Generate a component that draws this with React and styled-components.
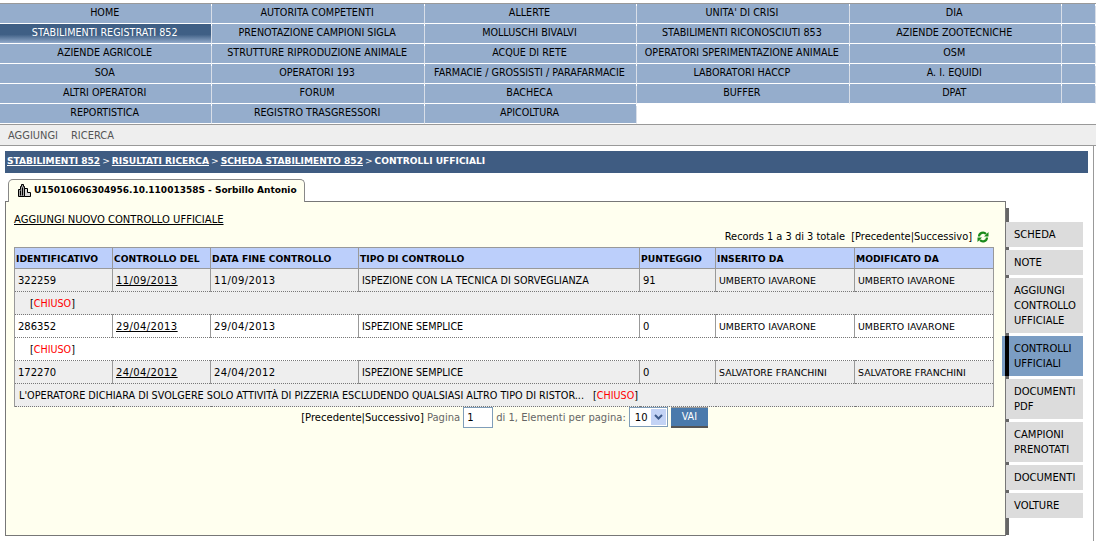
import React from 'react';
import styled, { createGlobalStyle } from 'styled-components';

const Global = createGlobalStyle`
  html, body { margin: 0; padding: 0; background: #fff; }
  body { font-family: "DejaVu Sans", Verdana, sans-serif; font-size: 9.6px; color: #000; overflow: hidden; }
  * { box-sizing: border-box; }
`;

const Page = styled.div`
  width: 1096px;
  height: 541px;
  padding-top: 3px;
  overflow: hidden;
`;
const Menu = styled.nav`
  display: grid;
  grid-template-columns: repeat(5, 212.4px) 34px;
  grid-auto-rows: 20px;
  border-top: 1px solid #999;
  height: 121px;
`;
const MenuItem = styled.a`
  position: relative;
  display: flex;
  justify-content: center;
  align-items: flex-start;
  padding: 3px 2px 0 0;
  line-height: 12px;
  white-space: nowrap;
  background: ${p => p.$active
    ? 'linear-gradient(#3f5f85 0, #3f5f85 55%, #93abcb 100%)'
    : '#95adcc'};
  color: ${p => (p.$active ? '#fff' : '#000')};
  border-right: 1px solid #d8dee8;
  border-bottom: 1px solid #fff;
  &::after {
    content: "";
    position: absolute;
    top: 0;
    right: -1px;
    width: 1px;
    height: 2px;
    background: #fff;
  }
`;
const SubBar = styled.div`
  display: flex;
  gap: 13px;
  height: 22px;
  padding: 5px 8px 0;
  font-size: 9.9px;
  line-height: 12px;
  background: #eee;
  border-top: 1px solid #999;
  border-bottom: 1px solid #999;
  color: #555;
`;
const Main = styled.main`
  width: 1094px;
  height: 396px;
  padding: 5px 5px 0;
  border-right: 1px solid #999;
`;
const Crumbs = styled.div`
  height: 22px;
  width: 1083px;
  padding: 3px 2px 0;
  background: #3f5c82;
  color: #fff;
  font-size: 9.1px;
  font-weight: bold;
  line-height: 14px;
  white-space: nowrap;
`;
const CrumbLink = styled.a`
  text-decoration: underline;
`;
const CrumbSep = styled.span`
  font-weight: normal;
  margin: 0 2px;
`;
const TabRow = styled.div`
  display: flex;
  height: 23px;
  margin-top: 6px;
  padding-left: 3px;
  position: relative;
  z-index: 1;
`;
const Tab = styled.div`
  display: flex;
  align-items: center;
  gap: 2px;
  width: 297px;
  height: 23px;
  padding: 0 0 2px 8px;
  background: #ffffef;
  border: 1px solid #888;
  border-bottom: none;
  border-radius: 5px 5px 0 0;
  font-size: 9px;
  font-weight: bold;
  white-space: nowrap;
  & > svg { flex: none; }
`;
const Body = styled.div`
  display: flex;
  margin-top: -1px;
`;
const Panel = styled.section`
  width: 1001px;
  height: 335px;
  padding: 12px 8px 0;
  background: #ffffef;
  border: 1px solid #777;
`;
const AddLink = styled.a`
  display: block;
  font-size: 10px;
  line-height: 12px;
  text-decoration: underline;
`;
const Records = styled.div`
  display: flex;
  justify-content: flex-end;
  align-items: center;
  gap: 5px;
  height: 14px;
  margin-top: 4px;
  padding-right: 8px;
  font-size: 9.850px;
  line-height: 12px;
`;
const Table = styled.table`
  width: 979px;
  margin-top: 3px;
  border-collapse: collapse;
  table-layout: fixed;
  background: #fff;
`;
const Th = styled.th`
  height: 21px;
  padding: 0 1px;
  text-align: left;
  white-space: nowrap;
  background: #bccffb;
  border: 1px solid #999;
  font-size: 9.2px;
  font-weight: bold;
`;
const sizeFor = p => (p.$num ? '10px' : p.$name ? '9.400px' : 'inherit');
const Td = styled.td`
  height: 23px;
  padding: 0 3px;
  white-space: nowrap;
  background: ${p => (p.$alt ? '#eee' : '#fff')};
  border-left: 1px solid #999;
  border-right: 1px solid #999;
  border-bottom: 1px dotted #777;
  font-size: ${sizeFor};
  letter-spacing: ${p => (p.$date ? '0.4px' : 'normal')};
`;
const NoteCell = styled(Td)`
  padding-left: ${p => (p.$note ? '4px' : '15px')};
`;
const NoteText = styled.span`
  margin-right: 9px;
  font-size: 9.700px;
`;
const DateLink = styled.a`
  text-decoration: underline;
`;
const Closed = styled.span`
  color: #f00;
`;
const Pager = styled.div`
  display: flex;
  justify-content: center;
  align-items: center;
  gap: 3px;
  height: 20px;
  width: 981px;
  font-size: 10px;
  color: #666;
  white-space: nowrap;
`;
const Dark = styled.span`
  color: #000;
`;
const PageInput = styled.input`
  width: 30px;
  height: 21px;
  padding: 0 3px;
  border: 1px solid #7f9db9;
  background: #fff;
  font: 10px "DejaVu Sans", sans-serif;
  color: #000;
`;
const SelectBox = styled.div`
  display: flex;
  align-items: center;
  width: 39px;
  height: 20px;
  padding: 1px;
  border: 1px solid #7f9db9;
  background: #fff;
  color: #000;
`;
const SelectValue = styled.span`
  flex: 1;
  padding-left: 4px;
`;
const SelectArrow = styled.span`
  display: flex;
  align-items: center;
  justify-content: center;
  width: 15px;
  height: 16px;
  background: #c3d3f5;
`;
const Go = styled.button`
  width: 37px;
  height: 21px;
  padding: 0;
  background: #4a7aac;
  color: #fff;
  border: none;
  border-top: 1px solid #999;
  border-bottom: 2px solid #555;
  font: 9.6px "DejaVu Sans", sans-serif;
`;
const Side = styled.aside`
  display: flex;
  flex-direction: column;
  gap: 3px;
  width: 81px;
  height: 327px;
  margin-top: 7px;
  padding-top: 14px;
  border-left: 3px solid #666;
`;
const SideItem = styled.a`
  position: relative;
  display: block;
  margin-left: ${p => (p.$active ? '-7px' : '-3px')};
  width: ${p => (p.$active ? '81px' : '77px')};
  padding: ${p => (p.$active ? '5px 4px 5px 12px' : '5px 4px 5px 8px')};
  font-size: 10px;
  line-height: 15px;
  background: ${p => (p.$active ? '#7b9dc3' : '#dcdcdc')};
  color: #000;
  &::before {
    content: ${p => (p.$active ? '""' : 'none')};
    position: absolute;
    left: 3px;
    top: 0;
    bottom: 0;
    width: 4px;
    background: #000;
  }
`;

const menu = [
  'HOME', 'AUTORITA COMPETENTI', 'ALLERTE', "UNITA' DI CRISI", 'DIA', '',
  'STABILIMENTI REGISTRATI 852', 'PRENOTAZIONE CAMPIONI SIGLA', 'MOLLUSCHI BIVALVI', 'STABILIMENTI RICONOSCIUTI 853', 'AZIENDE ZOOTECNICHE', '',
  'AZIENDE AGRICOLE', 'STRUTTURE RIPRODUZIONE ANIMALE', 'ACQUE DI RETE', 'OPERATORI SPERIMENTAZIONE ANIMALE', 'OSM', '',
  'SOA', 'OPERATORI 193', 'FARMACIE / GROSSISTI / PARAFARMACIE', 'LABORATORI HACCP', 'A. I. EQUIDI', '',
  'ALTRI OPERATORI', 'FORUM', 'BACHECA', 'BUFFER', 'DPAT', '',
  'REPORTISTICA', 'REGISTRO TRASGRESSORI', 'APICOLTURA',
];
const widths = [98, 98, 148, 281, 76, 139, 139];
const heads = ['IDENTIFICATIVO', 'CONTROLLO DEL', 'DATA FINE CONTROLLO', 'TIPO DI CONTROLLO', 'PUNTEGGIO', 'INSERITO DA', 'MODIFICATO DA'];
const rows = [
  { id: '322259', d: '11/09/2013', tipo: 'ISPEZIONE CON LA TECNICA DI SORVEGLIANZA', p: '91', by: 'UMBERTO IAVARONE', alt: true },
  { id: '286352', d: '29/04/2013', tipo: 'ISPEZIONE SEMPLICE', p: '0', by: 'UMBERTO IAVARONE', alt: false },
  { id: '172270', d: '24/04/2012', tipo: 'ISPEZIONE SEMPLICE', p: '0', by: 'SALVATORE FRANCHINI', alt: true,
    note: "L'OPERATORE DICHIARA DI SVOLGERE SOLO ATTIVITÀ DI PIZZERIA ESCLUDENDO QUALSIASI ALTRO TIPO DI RISTOR..." },
];
const side = [
  ['SCHEDA'], ['NOTE'], ['AGGIUNGI', 'CONTROLLO', 'UFFICIALE'], ['CONTROLLI', 'UFFICIALI'],
  ['DOCUMENTI', 'PDF'], ['CAMPIONI', 'PRENOTATI'], ['DOCUMENTI'], ['VOLTURE'],
];

const Building = () => (
  <svg width="15" height="14" viewBox="0 0 15 14">
    <path d="M1.500 13.500V6.500h2V3.500h1V1.500h2v2h1v10z" fill="#a8a8a8" stroke="#000" strokeWidth="1" />
    <path d="M7.500 13.500V5.500h3v4h3v4z" fill="#d8d8d8" stroke="#000" strokeWidth="1" />
    <path d="M3.500 7.500v5M5.500 4.500v8" stroke="#000" strokeWidth="1" />
  </svg>
);
const Refresh = () => (
  <svg width="12" height="12" viewBox="0 0 12 12" fill="none">
    <path d="M2 5.500a4 4 0 0 1 7-2.500M10 6.500a4 4 0 0 1-7 2.500" stroke="#1a8a1a" strokeWidth="2.200" />
    <path d="M11.500 1v4.500H7zM.5 11V6.500H5z" fill="#1a8a1a" />
  </svg>
);
const Caret = () => (
  <svg width="9" height="6" viewBox="0 0 9 6" fill="none">
    <path d="M1 1l3.500 3.500L8 1" stroke="#3d5a8a" strokeWidth="2" />
  </svg>
);

export default function App() {
  return (
    <Page>
      <Global />
      <Menu>
        {menu.map((m, i) => (
          <MenuItem key={i} $active={i === 6}>{m}</MenuItem>
        ))}
      </Menu>
      <SubBar><span>AGGIUNGI</span><span>RICERCA</span></SubBar>
      <Main>
        <Crumbs>
          <CrumbLink>STABILIMENTI 852</CrumbLink><CrumbSep>&gt;</CrumbSep>
          <CrumbLink>RISULTATI RICERCA</CrumbLink><CrumbSep>&gt;</CrumbSep>
          <CrumbLink>SCHEDA STABILIMENTO 852</CrumbLink><CrumbSep>&gt;</CrumbSep>
          CONTROLLI UFFICIALI
        </Crumbs>
        <TabRow>
          <Tab><Building />U15010606304956.10.11001358S - Sorbillo Antonio</Tab>
        </TabRow>
        <Body>
          <Panel>
            <AddLink>AGGIUNGI NUOVO CONTROLLO UFFICIALE</AddLink>
            <Records>
              <span>Records 1 a 3 di 3 totale&nbsp; [Precedente|Successivo]</span>
              <Refresh />
            </Records>
            <Table>
              <colgroup>
                {widths.map((w, i) => <col key={i} width={w} />)}
              </colgroup>
              <thead>
                <tr>{heads.map(h => <Th key={h}>{h}</Th>)}</tr>
              </thead>
              <tbody>
                {rows.map(r => (
                  <React.Fragment key={r.id}>
                    <tr>
                      <Td $alt={r.alt} $num>{r.id}</Td>
                      <Td $alt={r.alt} $num $date><DateLink>{r.d}</DateLink></Td>
                      <Td $alt={r.alt} $num $date>{r.d}</Td>
                      <Td $alt={r.alt}>{r.tipo}</Td>
                      <Td $alt={r.alt} $num>{r.p}</Td>
                      <Td $alt={r.alt} $name>{r.by}</Td>
                      <Td $alt={r.alt} $name>{r.by}</Td>
                    </tr>
                    <tr>
                      <NoteCell colSpan={7} $alt={r.alt} $note={!!r.note}>
                        {r.note && <NoteText>{r.note}</NoteText>}[<Closed>CHIUSO</Closed>]
                      </NoteCell>
                    </tr>
                  </React.Fragment>
                ))}
              </tbody>
            </Table>
            <Pager>
              <Dark>[Precedente|Successivo]</Dark>
              <span>Pagina</span>
              <PageInput defaultValue="1" />
              <span>di 1, Elementi per pagina:</span>
              <SelectBox>
                <SelectValue>10</SelectValue>
                <SelectArrow><Caret /></SelectArrow>
              </SelectBox>
              <Go>VAI</Go>
            </Pager>
          </Panel>
          <Side>
            {side.map((lines, i) => (
              <SideItem key={i} $active={i === 3}>
                {lines.map((l, j) => <div key={j}>{l}</div>)}
              </SideItem>
            ))}
          </Side>
        </Body>
      </Main>
    </Page>
  );
}
